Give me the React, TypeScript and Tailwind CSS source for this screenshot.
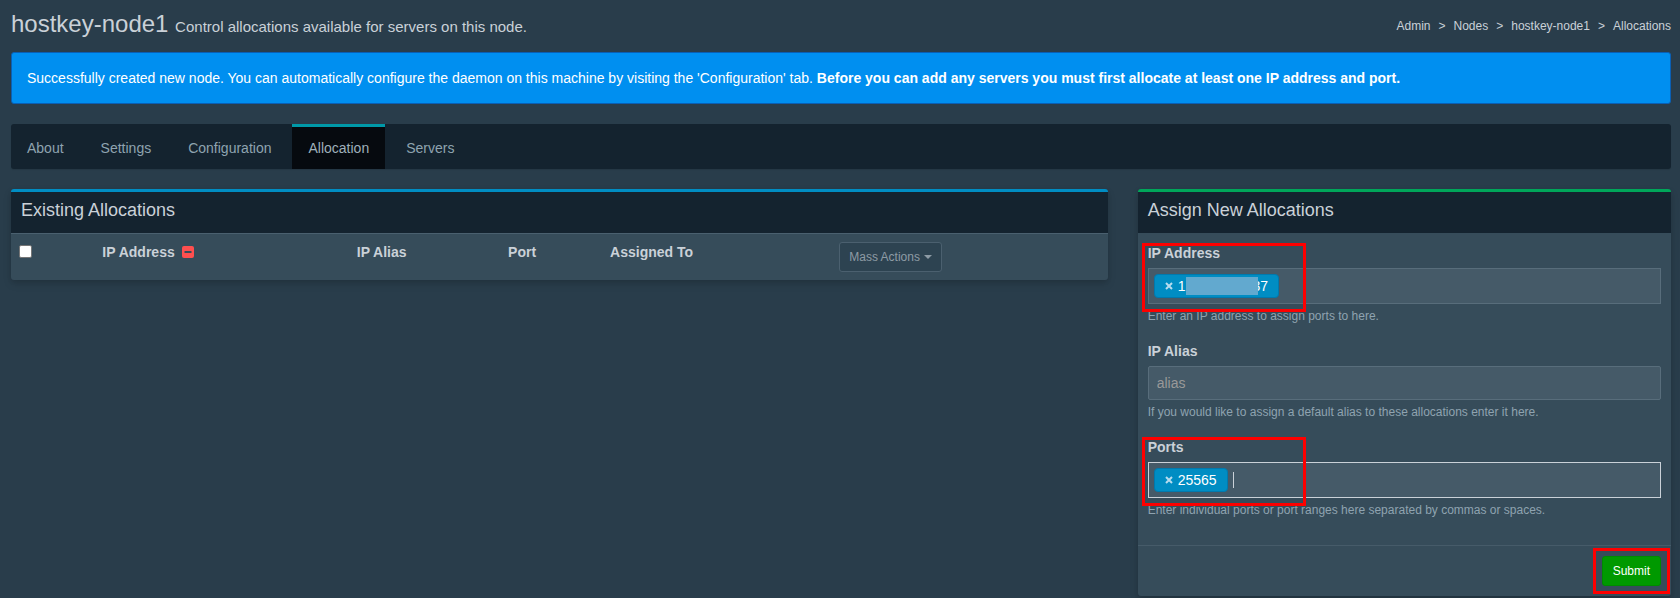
import React from 'react';

const tabs = ['About', 'Settings', 'Configuration', 'Allocation', 'Servers'];
const crumbs = ['Admin', 'Nodes', 'hostkey-node1'];

const Tag: React.FC<{ label: string; children: React.ReactNode }> = ({ label, children }) => (
  <span className="flex h-6 shrink-0 items-center rounded border border-[#0079ad] bg-[#008dc3] px-[10px] text-sm leading-5 text-white">
    <button type="button" aria-label={label} className="mr-[5px] flex w-2 justify-center">
      <svg viewBox="0 0 8 8" className="size-2 shrink-0" stroke="#b7dcee" strokeWidth="2">
        <path d="M1 1l6 6M7 1L1 7" />
      </svg>
    </button>
    {children}
  </span>
);

const Field: React.FC<{ id: string; label: string; help: string; marked?: boolean; children: React.ReactNode }> = ({
  id,
  label,
  help,
  marked,
  children,
}) => (
  <div className="relative mb-4">
    <label htmlFor={id} className="mb-[5px] block text-sm font-bold leading-5">
      {label}
    </label>
    {children}
    <p className="mt-1 text-xs leading-[17px] text-[#8fa3b0]">{help}</p>
    {marked && <div className="pointer-events-none absolute -left-[6px] top-0 h-[69px] w-[164px] border-[3px] border-[#fe0000]" />}
  </div>
);

export default function App() {
  return (
    <div className="min-h-screen bg-[#293d4b] pl-[11px] pr-[9px] font-['Liberation_Sans',Arial,sans-serif] text-sm leading-5 text-[#cad1d8]">
      <header className="flex items-center justify-between pb-[14px] pt-[9px]">
        <h1 className="text-2xl leading-[29px]">
          hostkey-node1 <small className="text-[15px] leading-none">Control allocations available for servers on this node.</small>
        </h1>
        <nav aria-label="Breadcrumb" className="pt-1">
          <ol className="flex text-xs leading-5">
            {crumbs.map((crumb) => (
              <li key={crumb} className="after:px-2 after:content-['>']">
                <a href="#">{crumb}</a>
              </li>
            ))}
            <li>Allocations</li>
          </ol>
        </nav>
      </header>

      <div role="alert" className="mb-5 rounded-[3px] border border-[#0a5fb4] bg-[#008ff0] p-[15px] text-white">
        Successfully created new node. You can automatically configure the daemon on this machine by visiting the
        'Configuration' tab.{' '}
        <strong>Before you can add any servers you must first allocate at least one IP address and port.</strong>
      </div>

      <nav className="mb-5 flex gap-[5px] rounded-[3px] bg-[#14232f] shadow-[0_1px_1px_rgba(0,0,0,0.1)]">
        {tabs.map((tab) => (
          <a
            key={tab}
            href="#"
            className={
              tab === 'Allocation'
                ? 'border-t-[3px] border-[#0099a8] bg-[#060a0f] px-4 py-[11px] text-[#9fb0ba]'
                : 'border-t-[3px] border-transparent px-4 py-[11px] text-[#8fa3b0]'
            }
          >
            {tab}
          </a>
        ))}
      </nav>

      <main className="grid grid-cols-12 items-start gap-x-[30px]">
        <section className="col-span-8 rounded-[3px] border-t-[3px] border-[#008dc3] bg-[#364c5a] shadow-[0_4px_8px_rgba(0,0,0,0.12),0_2px_4px_rgba(0,0,0,0.08)]">
          <h3 className="bg-[#14232f] px-[10px] pb-3 pt-[7px] text-lg leading-[22px]">Existing Allocations</h3>
          <table className="w-full table-fixed border-t border-[#4a606f] text-left">
            <colgroup>
              <col className="w-[7.6%]" />
              <col className="w-[23.2%]" />
              <col className="w-[13.8%]" />
              <col className="w-[9.3%]" />
              <col className="w-[20.9%]" />
              <col />
            </colgroup>
            <thead>
              <tr className="align-top">
                <th className="p-2">
                  <input
                    type="checkbox"
                    aria-label="Select all allocations"
                    className="mt-[3px] block size-[13px] appearance-none rounded-[2px] border border-[#767676] bg-white"
                  />
                </th>
                <th className="p-2">
                  <span className="flex items-center gap-[7px]">
                    IP Address
                    <button type="button" aria-label="Delete IP block">
                      <svg viewBox="0 0 12 12" className="size-3">
                        <rect width="12" height="12" rx="2" fill="#ff4f4f" />
                        <path d="M2.5 5h7v2h-7z" fill="#364c5a" />
                      </svg>
                    </button>
                  </span>
                </th>
                <th className="p-2">IP Alias</th>
                <th className="p-2">Port</th>
                <th className="p-2">Assigned To</th>
                <th className="p-2 font-normal">
                  <button
                    type="button"
                    disabled
                    className="flex h-[30px] items-center gap-1 rounded-[3px] border border-[#4b606f] bg-[#2d4351] px-[9px] text-xs text-[#8d9ba5]"
                  >
                    Mass Actions
                    <svg viewBox="0 0 8 4" className="h-1 w-2" fill="currentColor">
                      <path d="M0 0h8L4 4z" />
                    </svg>
                  </button>
                </th>
              </tr>
            </thead>
          </table>
        </section>

        <section className="col-span-4 rounded-[3px] border-t-[3px] border-[#00a65a] bg-[#364c5a] shadow-[0_4px_8px_rgba(0,0,0,0.12),0_2px_4px_rgba(0,0,0,0.08)]">
          <h3 className="bg-[#14232f] px-[10px] pb-3 pt-[7px] text-lg leading-[22px]">Assign New Allocations</h3>
          <form onSubmit={(e) => e.preventDefault()}>
            <div className="p-[10px]">
              <Field id="ip" label="IP Address" help="Enter an IP address to assign ports to here." marked>
                <div className="flex h-9 items-center border border-[#586d7b] bg-[#455a68] px-[5px]">
                  <Tag label="Remove address">
                    1<span className="relative -mr-[6px] ml-px h-[18px] w-[72px] bg-[#62a9cf]" />
                    37
                  </Tag>
                  <input id="ip" className="ml-[5px] min-w-0 flex-1 bg-transparent outline-none" />
                </div>
              </Field>
              <Field
                id="alias"
                label="IP Alias"
                help="If you would like to assign a default alias to these allocations enter it here."
              >
                <input
                  id="alias"
                  placeholder="alias"
                  className="block h-[34px] w-full rounded-[2px] border border-[#586d7b] bg-[#455a68] px-2 outline-none placeholder:text-[#999999]"
                />
              </Field>
              <Field
                id="ports"
                label="Ports"
                help="Enter individual ports or port ranges here separated by commas or spaces."
                marked
              >
                <div className="flex h-9 items-center border border-[#cad1d8] bg-[#455a68] px-[5px]">
                  <Tag label="Remove port">25565</Tag>
                  <span className="ml-[5px] h-4 w-px bg-[#cad1d8]" />
                  <input id="ports" className="min-w-0 flex-1 bg-transparent outline-none" />
                </div>
              </Field>
            </div>
            <div className="flex justify-end border-t border-[#465b69] p-[10px]">
              <div className="relative">
                <button
                  type="submit"
                  className="block h-[30px] rounded-[3px] border border-[#008a00] bg-[#009900] px-[10px] text-xs text-white"
                >
                  Submit
                </button>
                <div className="pointer-events-none absolute -inset-x-[9px] -inset-y-2 border-[3px] border-[#fe0000]" />
              </div>
            </div>
          </form>
        </section>
      </main>
    </div>
  );
}
